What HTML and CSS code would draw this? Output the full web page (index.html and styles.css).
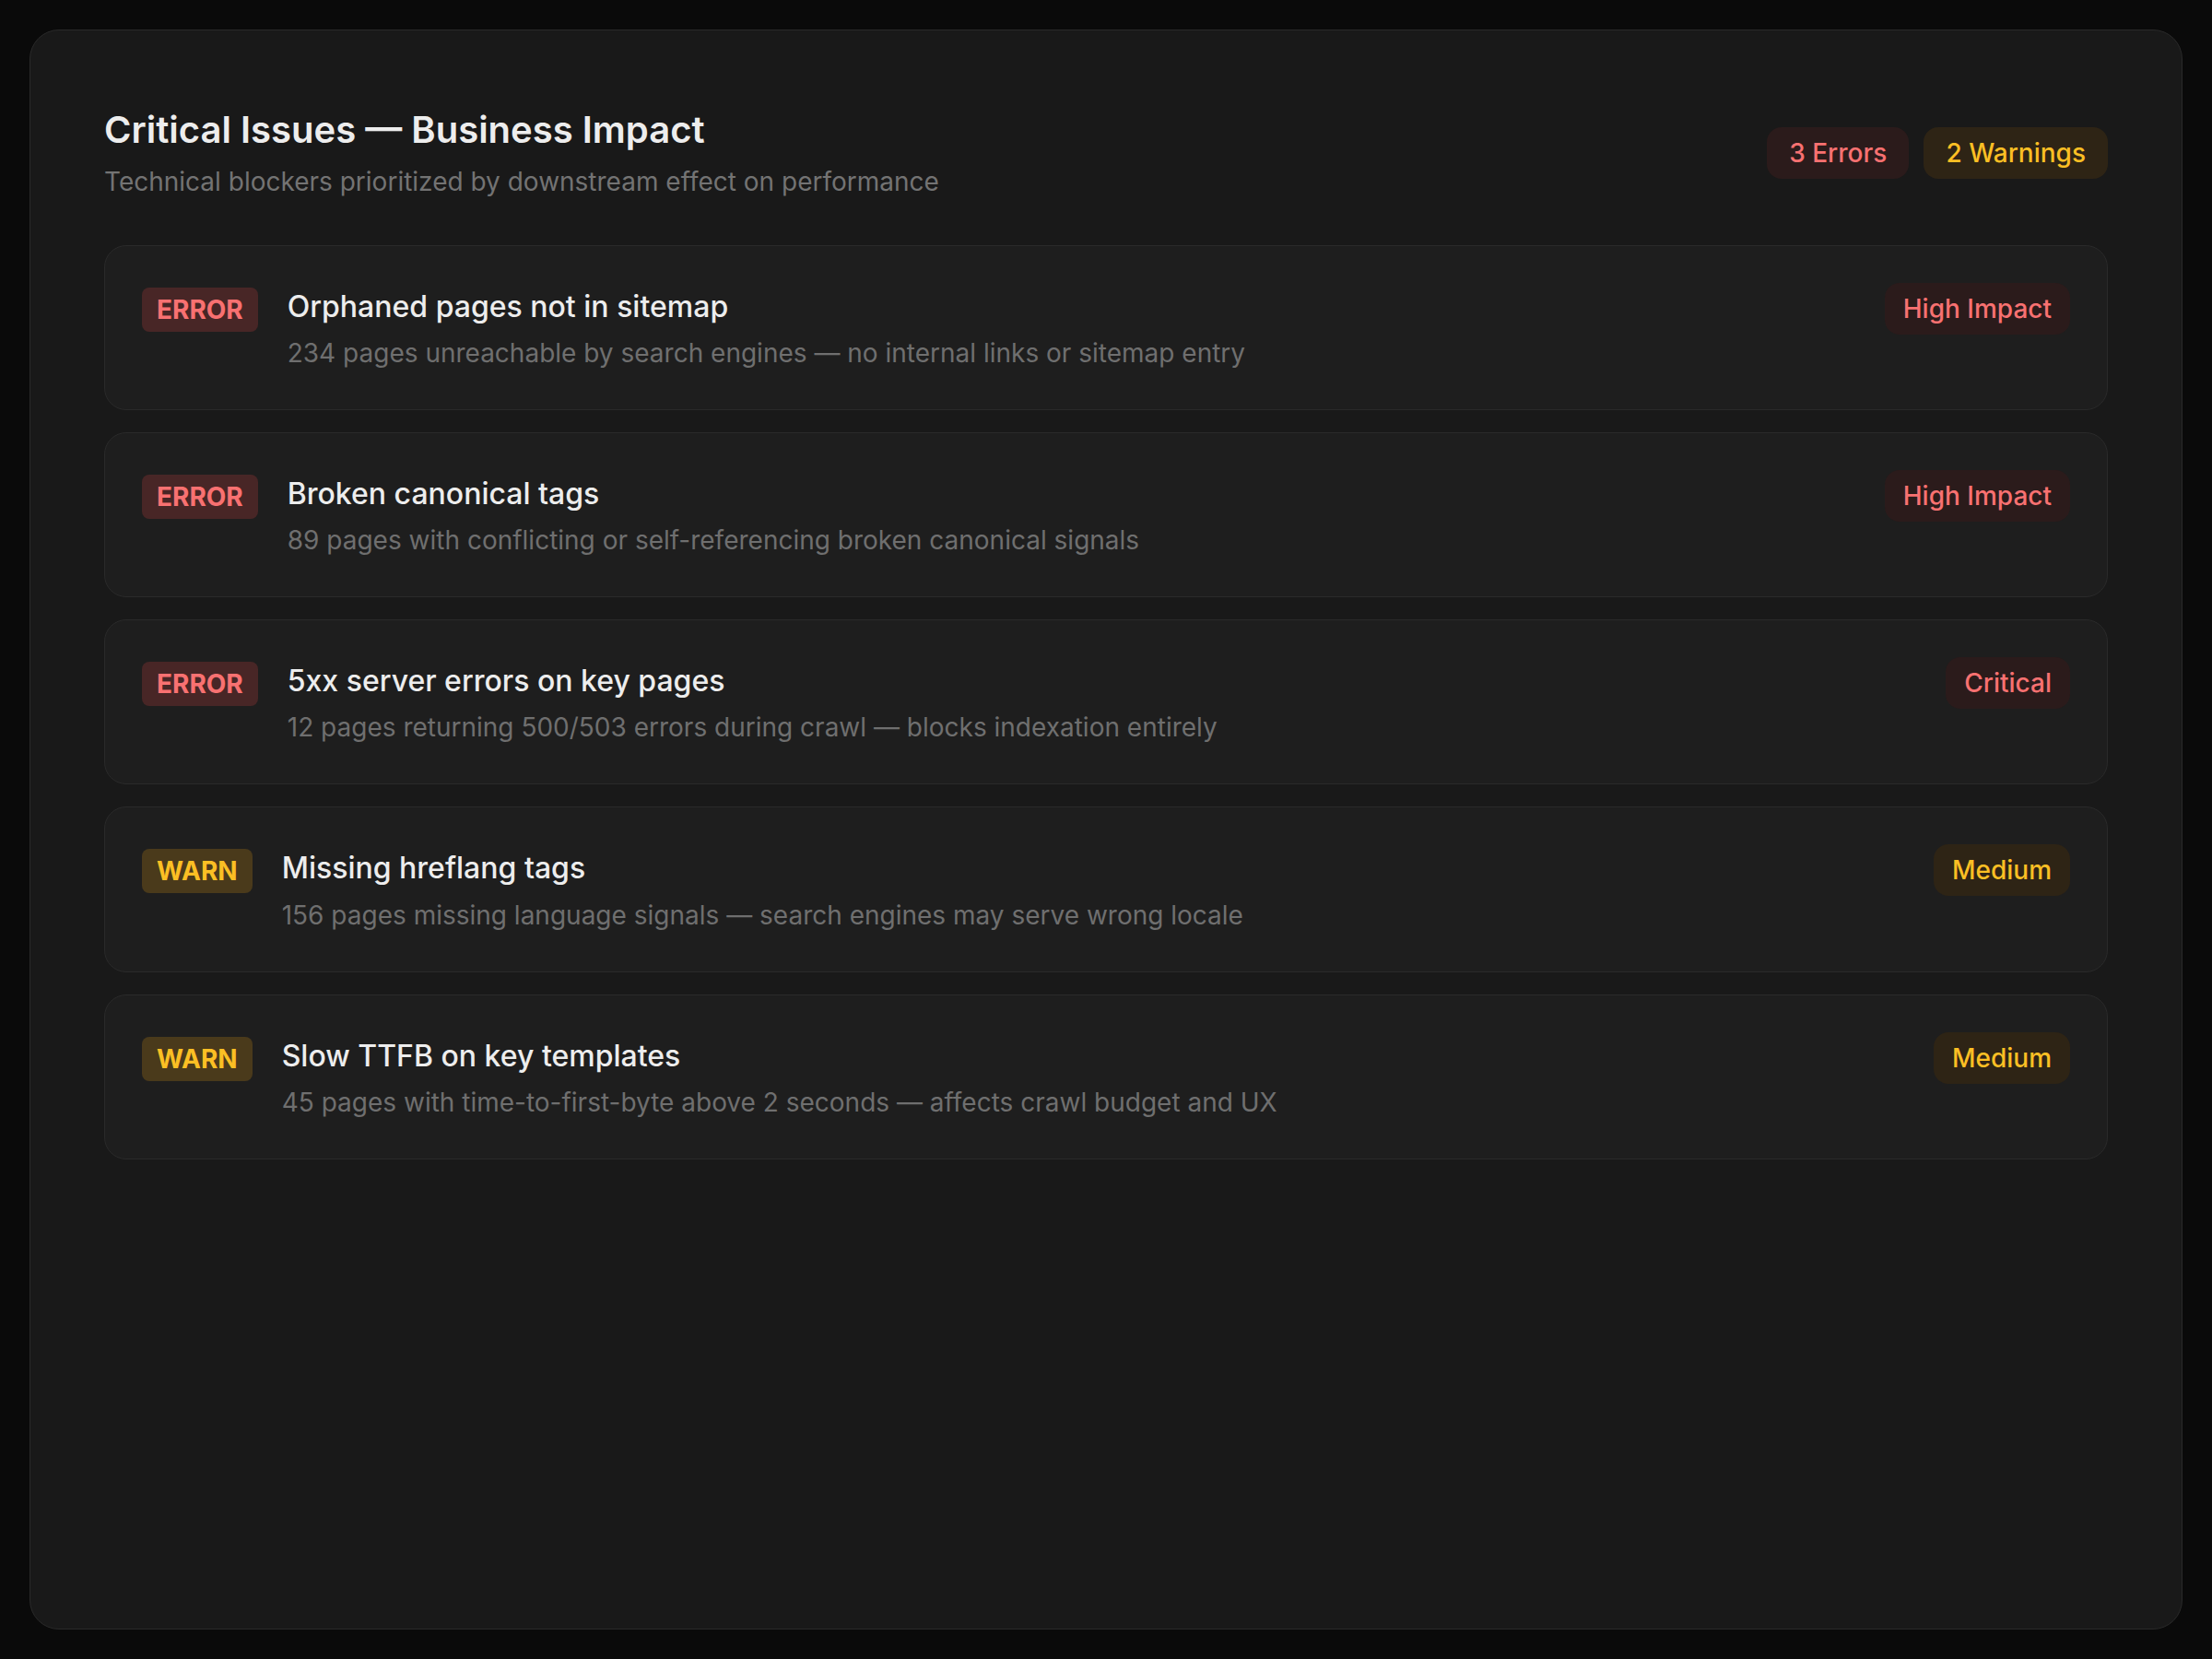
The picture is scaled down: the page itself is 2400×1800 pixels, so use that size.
FILE: index.html
```html
<!DOCTYPE html>
<html lang="en">
<head>
    <meta charset="UTF-8">
    <title>Critical Issues</title>
    <link rel="stylesheet" href="styles.css">
</head>
<body>
    <div class="panel">
        <div class="panel-head">
            <div>
                <h2>Critical Issues — Business Impact</h2>
                <p class="sous-titre">Technical blockers prioritized by downstream effect on performance</p>
            </div>
            <div class="compteurs">
                <span class="compteur erreur">3 Errors</span>
                <span class="compteur alerte">2 Warnings</span>
            </div>
        </div>

        <div class="liste">
            <div class="issue">
                <span class="tag erreur">ERROR</span>
                <div class="texte">
                    <h3>Orphaned pages not in sitemap</h3>
                    <p>234 pages unreachable by search engines — no internal links or sitemap entry</p>
                </div>
                <span class="impact erreur">High Impact</span>
            </div>

            <div class="issue">
                <span class="tag erreur">ERROR</span>
                <div class="texte">
                    <h3>Broken canonical tags</h3>
                    <p>89 pages with conflicting or self-referencing broken canonical signals</p>
                </div>
                <span class="impact erreur">High Impact</span>
            </div>

            <div class="issue">
                <span class="tag erreur">ERROR</span>
                <div class="texte">
                    <h3>5xx server errors on key pages</h3>
                    <p>12 pages returning 500/503 errors during crawl — blocks indexation entirely</p>
                </div>
                <span class="impact erreur">Critical</span>
            </div>

            <div class="issue">
                <span class="tag alerte">WARN</span>
                <div class="texte">
                    <h3>Missing hreflang tags</h3>
                    <p>156 pages missing language signals — search engines may serve wrong locale</p>
                </div>
                <span class="impact alerte">Medium</span>
            </div>

            <div class="issue">
                <span class="tag alerte">WARN</span>
                <div class="texte">
                    <h3>Slow TTFB on key templates</h3>
                    <p>45 pages with time-to-first-byte above 2 seconds — affects crawl budget and UX</p>
                </div>
                <span class="impact alerte">Medium</span>
            </div>
        </div>
    </div>
</body>
</html>
```

FILE: styles.css
```css
* {
    box-sizing: border-box;
}

body {
    font-family: 'Inter', 'Liberation Sans', sans-serif;
    margin: 0;
    padding: 32px;
    background-color: #0a0a0a;
    color: #ededed;
    line-height: 1.6;
}

.panel {
    min-height: calc(100vh - 64px);
    background: #191919;
    border: 1px solid #2a2a2a;
    border-radius: 32px;
    padding: 80px;
}

.panel-head {
    display: flex;
    justify-content: space-between;
    align-items: center;
    margin-bottom: 46px;
}

h2 {
    font-size: 40px;
    font-weight: 600;
    line-height: 1.4;
    margin: 0;
    color: #ededed;
}

.sous-titre {
    font-size: 28px;
    margin: 6px 0 0;
    color: #737373;
}

.compteurs {
    display: flex;
    gap: 16px;
}

.compteur {
    font-size: 28px;
    font-weight: 500;
    line-height: 36px;
    padding: 10px 24px;
    border-radius: 16px;
}

.liste {
    display: flex;
    flex-direction: column;
    gap: 24px;
}

.issue {
    display: flex;
    align-items: flex-start;
    gap: 32px;
    background: #1e1e1e;
    border: 1px solid #2a2a2a;
    border-radius: 24px;
    padding: 40px;
}

.tag {
    font-size: 28px;
    font-weight: 700;
    line-height: 40px;
    padding: 4px 16px;
    border-radius: 8px;
    margin-top: 5px;
}

.texte {
    flex: 1;
}

h3 {
    font-size: 32px;
    font-weight: 500;
    line-height: 1.6;
    margin: 0 0 4px;
    color: #ededed;
}

.texte p {
    font-size: 28px;
    line-height: 1.5;
    margin: 0;
    color: #6f6f6f;
}

.impact {
    font-size: 28px;
    font-weight: 500;
    line-height: 36px;
    padding: 10px 20px;
    border-radius: 16px;
}

.erreur {
    color: #f87171;
}

.alerte {
    color: #fbbf24;
}

.compteur.erreur,
.impact.erreur {
    background: #2b1b1b;
}

.compteur.alerte,
.impact.alerte {
    background: #2e2415;
}

.tag.erreur {
    background: #482626;
}

.tag.alerte {
    background: #4a3a1b;
}
```
